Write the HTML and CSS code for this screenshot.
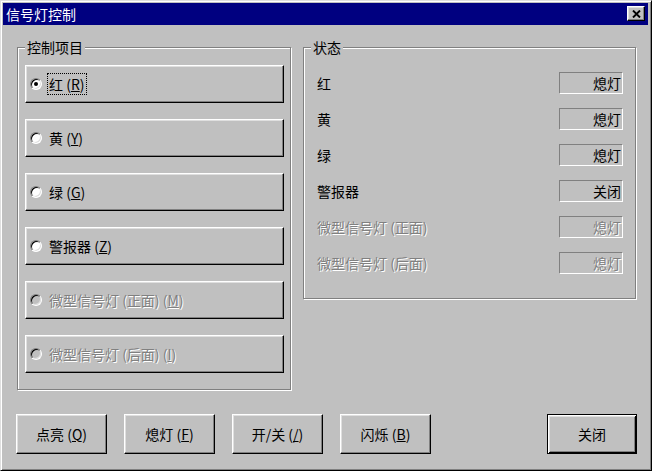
FILE: index.html
```html
<!DOCTYPE html>
<html lang="zh-CN">

<head>
    <meta charset="UTF-8">
    <meta name="viewport" content="width=device-width, initial-scale=1.0">
    <title>信号灯控制</title>
    <link rel="stylesheet" href="styles.css">
</head>

<body>
    <!-- 对话框窗口 -->
    <div class="window">
        <div class="titlebar">
            <span class="title">信号灯控制</span>
            <button class="close-btn" title="关闭">
                <svg width="9" height="8" viewBox="0 0 9 8">
                    <path d="M1 0.5 L8 7.5 M8 0.5 L1 7.5" stroke="#000" stroke-width="1.9" fill="none" />
                </svg>
            </button>
        </div>

        <div class="client">
            <div class="groups">
                <!-- 控制项目 -->
                <div class="group group-control">
                    <span class="group-title">控制项目</span>
                    <div class="opt-btn">
                        <span class="radio checked"></span>
                        <span class="opt-text focus">红 (<u>R</u>)</span>
                    </div>
                    <div class="opt-btn">
                        <span class="radio"></span>
                        <span class="opt-text">黄 (<u>Y</u>)</span>
                    </div>
                    <div class="opt-btn">
                        <span class="radio"></span>
                        <span class="opt-text">绿 (<u>G</u>)</span>
                    </div>
                    <div class="opt-btn">
                        <span class="radio"></span>
                        <span class="opt-text">警报器 (<u>Z</u>)</span>
                    </div>
                    <div class="opt-btn disabled">
                        <span class="radio"></span>
                        <span class="opt-text">微型信号灯 (正面) (<u>M</u>)</span>
                    </div>
                    <div class="opt-btn disabled">
                        <span class="radio"></span>
                        <span class="opt-text">微型信号灯 (后面) (<u>I</u>)</span>
                    </div>
                </div>

                <!-- 状态 -->
                <div class="group group-status">
                    <span class="group-title">状态</span>
                    <div class="status-row">
                        <span class="status-name">红</span>
                        <span class="status-value">熄灯</span>
                    </div>
                    <div class="status-row">
                        <span class="status-name">黄</span>
                        <span class="status-value">熄灯</span>
                    </div>
                    <div class="status-row">
                        <span class="status-name">绿</span>
                        <span class="status-value">熄灯</span>
                    </div>
                    <div class="status-row">
                        <span class="status-name">警报器</span>
                        <span class="status-value">关闭</span>
                    </div>
                    <div class="status-row disabled">
                        <span class="status-name">微型信号灯 (正面)</span>
                        <span class="status-value">熄灯</span>
                    </div>
                    <div class="status-row disabled">
                        <span class="status-name">微型信号灯 (后面)</span>
                        <span class="status-value">熄灯</span>
                    </div>
                </div>
            </div>

            <!-- 底部按钮 -->
            <div class="actions">
                <button class="btn">点亮 (<u>Q</u>)</button>
                <button class="btn">熄灯 (<u>F</u>)</button>
                <button class="btn">开/关 (<u>/</u>)</button>
                <button class="btn">闪烁 (<u>B</u>)</button>
                <button class="btn btn-default">关闭</button>
            </div>
        </div>
    </div>
</body>

</html>
```

FILE: styles.css
```css
* {
    margin: 0;
    padding: 0;
    box-sizing: border-box;
}

body {
    font-family: "Noto Sans CJK SC", "Liberation Sans", sans-serif;
    font-size: 14px;
    color: #000;
    background-color: #c0c0c0;
}

/* 窗口外框 */
.window {
    width: 652px;
    height: 471px;
    background-color: #c0c0c0;
    border: 1px solid;
    border-color: #dfdfdf #000 #000 #dfdfdf;
    box-shadow: inset 1px 1px #fff, inset -1px -1px #808080;
    padding: 2px 3px 3px 2px;
    display: flex;
    flex-direction: column;
}

.titlebar {
    height: 22px;
    background-color: #000080;
    color: #fff;
    display: flex;
    align-items: center;
    justify-content: space-between;
    padding: 0 3px 0 3px;
}

.title {
    line-height: 20px;
}

.close-btn {
    width: 18px;
    height: 15px;
    margin-top: -1px;
    background-color: #c0c0c0;
    border: 1px solid;
    border-color: #fff #000 #000 #fff;
    box-shadow: inset -1px -1px #808080, inset 1px 1px #dfdfdf;
    display: flex;
    align-items: center;
    justify-content: center;
}

.client {
    flex: 1;
    padding: 22px 11px 0 13px;
}

.groups {
    display: flex;
    gap: 12px;
    padding-left: 1px;
}

/* 分组框：蚀刻线 */
.group {
    position: relative;
    border: 1px solid #808080;
    box-shadow: inset 1px 1px #fff, 1px 1px #fff;
}

.group-title {
    position: absolute;
    top: -10px;
    left: 7px;
    padding: 0 2px;
    line-height: 18px;
    background-color: #c0c0c0;
}

.group-control {
    width: 274px;
    height: 343px;
    padding: 17px 6px 0 7px;
    display: flex;
    flex-direction: column;
    gap: 16px;
}

.opt-btn {
    height: 38px;
    display: flex;
    align-items: center;
    gap: 7px;
    padding-left: 4px;
    border: 1px solid;
    border-color: #fff #000 #000 #fff;
    box-shadow: inset -1px -1px #808080, inset 1px 1px #dfdfdf;
}

.radio {
    position: relative;
    flex: none;
    width: 12px;
    height: 12px;
    border-radius: 50%;
    border: 1px solid;
    border-color: #808080 #fff #fff #808080;
    background-color: #fff;
    box-shadow: inset 1px 1px #000, inset -1px -1px #dfdfdf;
}

.radio.checked::after {
    content: "";
    position: absolute;
    left: 3px;
    top: 3px;
    width: 4px;
    height: 4px;
    border-radius: 50%;
    background-color: #000;
}

.opt-text {
    line-height: 18px;
}

.focus {
    outline: 1px dotted #000;
    outline-offset: 1px;
}

.disabled .radio {
    background-color: #c0c0c0;
}

.disabled .opt-text,
.disabled .status-name,
.disabled .status-value {
    color: #808080;
    text-shadow: 1px 1px #fff;
}

.group-status {
    width: 333px;
    height: 252px;
    padding: 24px 12px 0 13px;
    display: flex;
    flex-direction: column;
    gap: 14px;
}

.status-row {
    height: 22px;
    display: flex;
    align-items: center;
    justify-content: space-between;
}

.status-value {
    width: 64px;
    height: 22px;
    line-height: 20px;
    text-align: right;
    padding-right: 1px;
    border: 1px solid;
    border-color: #808080 #fff #fff #808080;
}

/* 底部按钮 */
.actions {
    display: flex;
    gap: 17px;
    margin-top: 24px;
}

.btn {
    width: 91px;
    height: 40px;
    font: inherit;
    color: #000;
    background-color: #c0c0c0;
    border: 1px solid;
    border-color: #fff #000 #000 #fff;
    box-shadow: inset -1px -1px #808080, inset 1px 1px #dfdfdf;
}

.btn-default {
    width: 90px;
    margin-left: auto;
    border-color: #000;
    box-shadow: inset 1px 1px #fff, inset -1px -1px #000, inset 2px 2px #dfdfdf, inset -2px -2px #808080;
}
```
